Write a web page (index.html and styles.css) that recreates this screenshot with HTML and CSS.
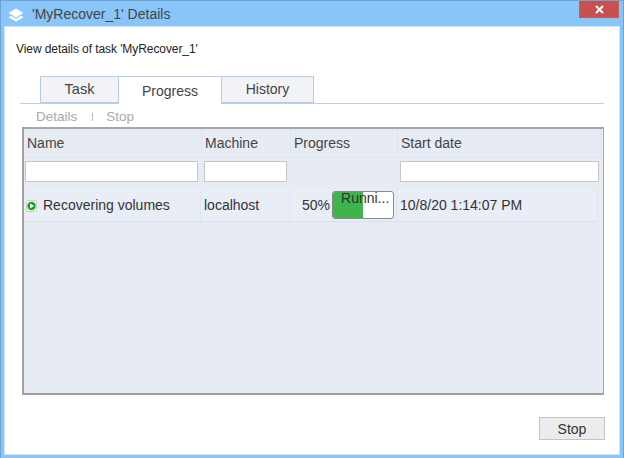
FILE: index.html
```html
<!DOCTYPE html>
<html lang="en">
<head>
<meta charset="utf-8">
<title>'MyRecover_1' Details</title>
<link rel="stylesheet" href="styles.css">
</head>
<body>
<div class="window">
  <header class="titlebar">
    <svg class="app-icon" width="16" height="16" viewBox="0 0 16 16"><path d="M8 1.5 15.5 6 8 10.5 .5 6Z" fill="#fff"/><path d="M3 8.8 8 11.8 13 8.8 15.5 10.2 8 14.5 .5 10.2Z" fill="#fff"/></svg>
    <span class="title">'MyRecover_1' Details</span>
    <button class="close" aria-label="Close"><svg width="9" height="9" viewBox="0 0 9 9"><path d="M1 1 8 8M8 1 1 8" stroke="#fff" stroke-width="2"/></svg></button>
  </header>
  <main class="client">
    <p class="subtitle">View details of task 'MyRecover_1'</p>
    <div class="tabs">
      <div class="tab tab-task">Task</div>
      <div class="tab tab-active">Progress</div>
      <div class="tab tab-history">History</div>
    </div>
    <div class="toolbar">
      <span>Details</span>
      <i class="sep"></i>
      <span>Stop</span>
    </div>
    <section class="panel">
      <div class="head">
        <div class="hcell">Name</div>
        <div class="hcell">Machine</div>
        <div class="hcell">Progress</div>
        <div class="hcell">Start date</div>
      </div>
      <div class="filters">
        <input class="filter" type="text">
        <input class="filter" type="text">
        <div></div>
        <input class="filter" type="text">
      </div>
      <div class="row">
        <div class="cell cell-name">
          <svg width="11" height="12" viewBox="0 0 11 12"><rect x=".5" y=".5" width="10" height="11" rx="1" fill="#f4f6f4" stroke="#c9d2c9"/><circle cx="5.5" cy="6" r="4.2" fill="#14a31a"/><path d="M4 3.4 8.2 6 4 8.6Z" fill="#fff"/></svg>
          <span>Recovering volumes</span>
        </div>
        <div class="cell">localhost</div>
        <div class="cell cell-progress">
          <span>50%</span>
          <div class="bar"><div class="fill" style="width:50%"></div><span class="bar-text">Runni...</span></div>
        </div>
        <div class="cell cell-date">10/8/20 1:14:07 PM</div>
      </div>
    </section>
    <footer class="actions"><button class="btn">Stop</button></footer>
  </main>
</div>
</body>
</html>
```
FILE: styles.css
```css
* { box-sizing: border-box; }
html, body { margin: 0; height: 100%; }
body { font-family: "Liberation Sans", Arial, sans-serif; font-size: 14px; color: #333; background: #fff; }
.window {
  width: 624px; height: 458px; display: flex; flex-direction: column;
  background: #8ac5fa; border: 1px solid #6fa3d3; border-bottom: 0; padding: 0 3px 3px 3px;
}
.titlebar { height: 25px; flex: none; display: flex; align-items: center; padding-left: 4px; position: relative; }
.app-icon { flex: none; margin-top: 2px; }
.title { margin-left: 8px; font-size: 14px; color: #444; margin-top: 1px; }
.close {
  position: absolute; right: 1px; top: 0; width: 40px; height: 17px; padding: 0; display: flex;
  align-items: center; justify-content: center; background: #c75050; border: 1px solid #d05a5a; border-top: 0;
}
.client {
  flex: 1; min-height: 0; background: #fff; border: 1px solid #cde4fb; display: flex; flex-direction: column;
  padding: 0 15px 0 17px;
}
.subtitle { margin: 15px 0 0 -6px; font-size: 12px; line-height: 14px; color: #222; height: 14px; letter-spacing: -0.08px; }
.tabs {
  margin: 20px 0 0 -2px; padding-left: 20px; display: flex; height: 28px; flex: none;
  border-bottom: 1px solid #bfcfe6;
}
.tab { height: 27px; background: #f2f3f7; border: 1px solid #b5cbe6; text-align: center; font-size: 14px; line-height: 24px; color: #444; }
.tab-task { width: 79px; font-size: 14.5px; }
.tab-history { width: 92px; border-left: 0; }
.tab-active { width: 103px; height: 28px; background: #fff; border-left: 0; border-bottom: 0; line-height: 28px; }
.toolbar { height: 23px; flex: none; display: flex; align-items: center; padding: 2px 0 0 14px; color: #a9a9a9; font-size: 13.5px; }
.sep { width: 1px; height: 8px; background: #bbb; margin: 0 13px 0 15px; }
.panel {
  height: 268px; flex: none; background: #e7ebf4;
  border: 1px solid #a6a6a6; border-width: 2px 1px 2px 2px; border-color: #a8a8a8 #a8a8a8 #a0a0a0 #a0a0a0;
}
.head, .filters { display: grid; grid-template-columns: 178px 89px 107px 203px; }
.head { height: 28px; }
.hcell { border-right: 1px solid #dfe5f0; border-bottom: 1px solid #dfe5f0; padding-left: 3px; line-height: 28px; color: #444; }
.filters { height: 32px; padding-top: 4px; }
.filter { height: 21px; border: 1px solid #c6c6c6; background: #fff; margin: 0; padding: 0; outline: 0; }
.filters .filter:nth-child(1) { width: 173px; margin-left: 1px; }
.filters .filter:nth-child(2) { width: 83px; margin-left: 2px; }
.filters .filter:nth-child(4) { width: 199px; margin-left: 2px; }
.row {
  display: grid; grid-template-columns: 176px 89px 107px 201px; height: 33px; margin-left: 1px; width: 573px;
  border-bottom: 1px solid #d8e0ee; background: #e9edf6;
}
.cell { display: flex; align-items: center; border-right: 1px solid #dfe5f0; padding-left: 3px; color: #333; }
.cell-name { padding-left: 1px; }
.cell-name svg { flex: none; margin-top: 1px; }
.cell-name span { margin-left: 6px; }
.cell-progress { padding-left: 12px; }
.cell-date { padding-left: 3px; }
.bar { position: relative; flex: none; width: 62px; height: 28px; margin-left: 2px; background: #fff; border: 1px solid #888; border-radius: 3px; overflow: hidden; }
.fill { height: 100%; background: #3fb44a; }
.bar-text { position: absolute; left: 8px; top: -2px; line-height: 16px; color: #333; }
.actions { flex: 1; display: flex; justify-content: flex-end; align-items: flex-end; }
.btn { width: 66px; height: 23px; margin: 0 -1px 14px 0; padding: 0; background: #ececec; border: 1px solid #c4c4c4; font: 14px "Liberation Sans", Arial, sans-serif; color: #333; }
```
